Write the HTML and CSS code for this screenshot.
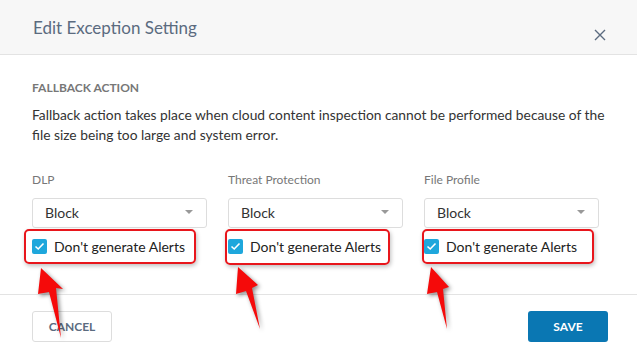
FILE: index.html
```html
<!DOCTYPE html>
<html>
<head>
<meta charset="utf-8">
<link rel="stylesheet" href="styles.css">
</head>
<body>
<div class="dialog">
  <div class="header">
    <div class="title">Edit Exception Setting</div>
    <svg class="close" width="12" height="12" viewBox="0 0 12 12"><path d="M1 1L11 11M11 1L1 11" stroke="#5b6b7f" stroke-width="1.4" fill="none"/></svg>
  </div>
  <div class="body">
    <div class="section-title">FALLBACK ACTION</div>
    <p class="desc">Fallback action takes place when cloud content inspection cannot be performed because of the file size being too large and system error.</p>
    <div class="cols">
      <div class="col">
        <div class="label">DLP</div>
        <div class="select"><span>Block</span><span class="caret"></span></div>
        <label class="check c1"><span class="box"><svg width="11" height="9" viewBox="0 0 11 9"><path d="M1.5 4.5L4.2 7L9.5 1.5" stroke="#fff" stroke-width="1.6" fill="none"/></svg></span>Don't generate Alerts</label>
      </div>
      <div class="col">
        <div class="label">Threat Protection</div>
        <div class="select"><span>Block</span><span class="caret"></span></div>
        <label class="check c2"><span class="box"><svg width="11" height="9" viewBox="0 0 11 9"><path d="M1.5 4.5L4.2 7L9.5 1.5" stroke="#fff" stroke-width="1.6" fill="none"/></svg></span>Don't generate Alerts</label>
      </div>
      <div class="col">
        <div class="label">File Profile</div>
        <div class="select"><span>Block</span><span class="caret"></span></div>
        <label class="check c3"><span class="box"><svg width="11" height="9" viewBox="0 0 11 9"><path d="M1.5 4.5L4.2 7L9.5 1.5" stroke="#fff" stroke-width="1.6" fill="none"/></svg></span>Don't generate Alerts</label>
      </div>
    </div>
  </div>
  <div class="footer">
    <button class="btn cancel">CANCEL</button>
    <button class="btn save">SAVE</button>
  </div>
  <svg class="arrows" width="637" height="357" viewBox="0 0 637 357">
    <polygon points="41,268 63,289 56,288 61,338 49,292 38,294"/>
    <polygon points="238,267 258,285 252,288 260,329 246,291 236,294"/>
    <polygon points="431,267 449,287 443,289 447,329 437,292 427,294"/>
  </svg>
</div>
</body>
</html>
```
FILE: styles.css
```css
* { box-sizing: border-box; }
html, body { margin: 0; padding: 0; background: #fff; }
body { font-family: Lato, "Open Sans", sans-serif; width: 637px; height: 357px; overflow: hidden; }
.dialog { position: relative; width: 637px; height: 357px; }
.header {
  height: 55px;
  background: #f7f7f7;
  border-bottom: 1px solid #e3e3e3;
  display: flex;
  align-items: center;
  justify-content: space-between;
  padding: 0 31px 0 33px;
}
.title { font-size: 17px; color: #5b6b7f; margin-top: 0; }
.close { margin-top: 15px; }
.body { padding: 0 29px 0 32px; }
.section-title {
  margin-top: 26px;
  font-size: 12px;
  line-height: 14px;
  font-weight: bold;
  color: #777;
}
.desc {
  margin: 10px -4px 0 0;
  font-size: 13.8px;
  line-height: 20px;
  color: #333;
}
.cols { display: flex; gap: 21px; margin-top: 28px; padding-bottom: 29px; }
.col { width: 175px; display: flex; flex-direction: column; align-items: flex-start; }
.label { font-size: 12px; line-height: 14px; color: #777; }
.select {
  margin-top: 11px;
  width: 175px;
  height: 30px;
  border: 1px solid #ddd;
  border-radius: 3px;
  display: flex;
  align-items: center;
  justify-content: space-between;
  padding: 0 13px 2px 12px;
  font-size: 14px;
  color: #333;
}
.caret {
  width: 0; height: 0;
  border-left: 4px solid transparent;
  border-right: 4px solid transparent;
  border-top: 4px solid #999;
}
.check {
  margin: 1px 0 0 -8px;
  border: 2px solid #e8161c;
  border-radius: 5px;
  padding: 7px 9px 7px 6px;
  display: flex;
  align-items: center;
  gap: 7px;
  font-size: 14px;
  line-height: 17px;
  color: #222;
  box-shadow: 1px 2px 4px rgba(0,0,0,0.25);
}
.check.c2 { margin-left: -3px; padding-left: 1px; padding-right: 7px; padding-bottom: 8px; }
.check.c3 { margin-left: -2px; padding-left: 0; padding-right: 15px; }
.box {
  width: 15px; height: 15px;
  background: #1ea7dc;
  border-radius: 2px;
  display: flex; align-items: center; justify-content: center;
}
.footer {
  border-top: 1px solid #e3e3e3;
  display: flex;
  justify-content: space-between;
  padding: 16px 29px 0 32px;
}
.btn {
  font-family: Lato, "Open Sans", sans-serif;
  font-size: 12px;
  font-weight: bold;
  height: 31px;
  width: 80px;
  border-radius: 3px;
}
.cancel { background: #fff; border: 1px solid #ddd; color: #5b6b7f; }
.save { background: #0a77b3; border: none; color: #fff; }
.arrows { position: absolute; left: 0; top: 0; pointer-events: none; }
.arrows polygon { fill: #f50a0a; filter: drop-shadow(2px 2px 2px rgba(0,0,0,0.45)); }
```
